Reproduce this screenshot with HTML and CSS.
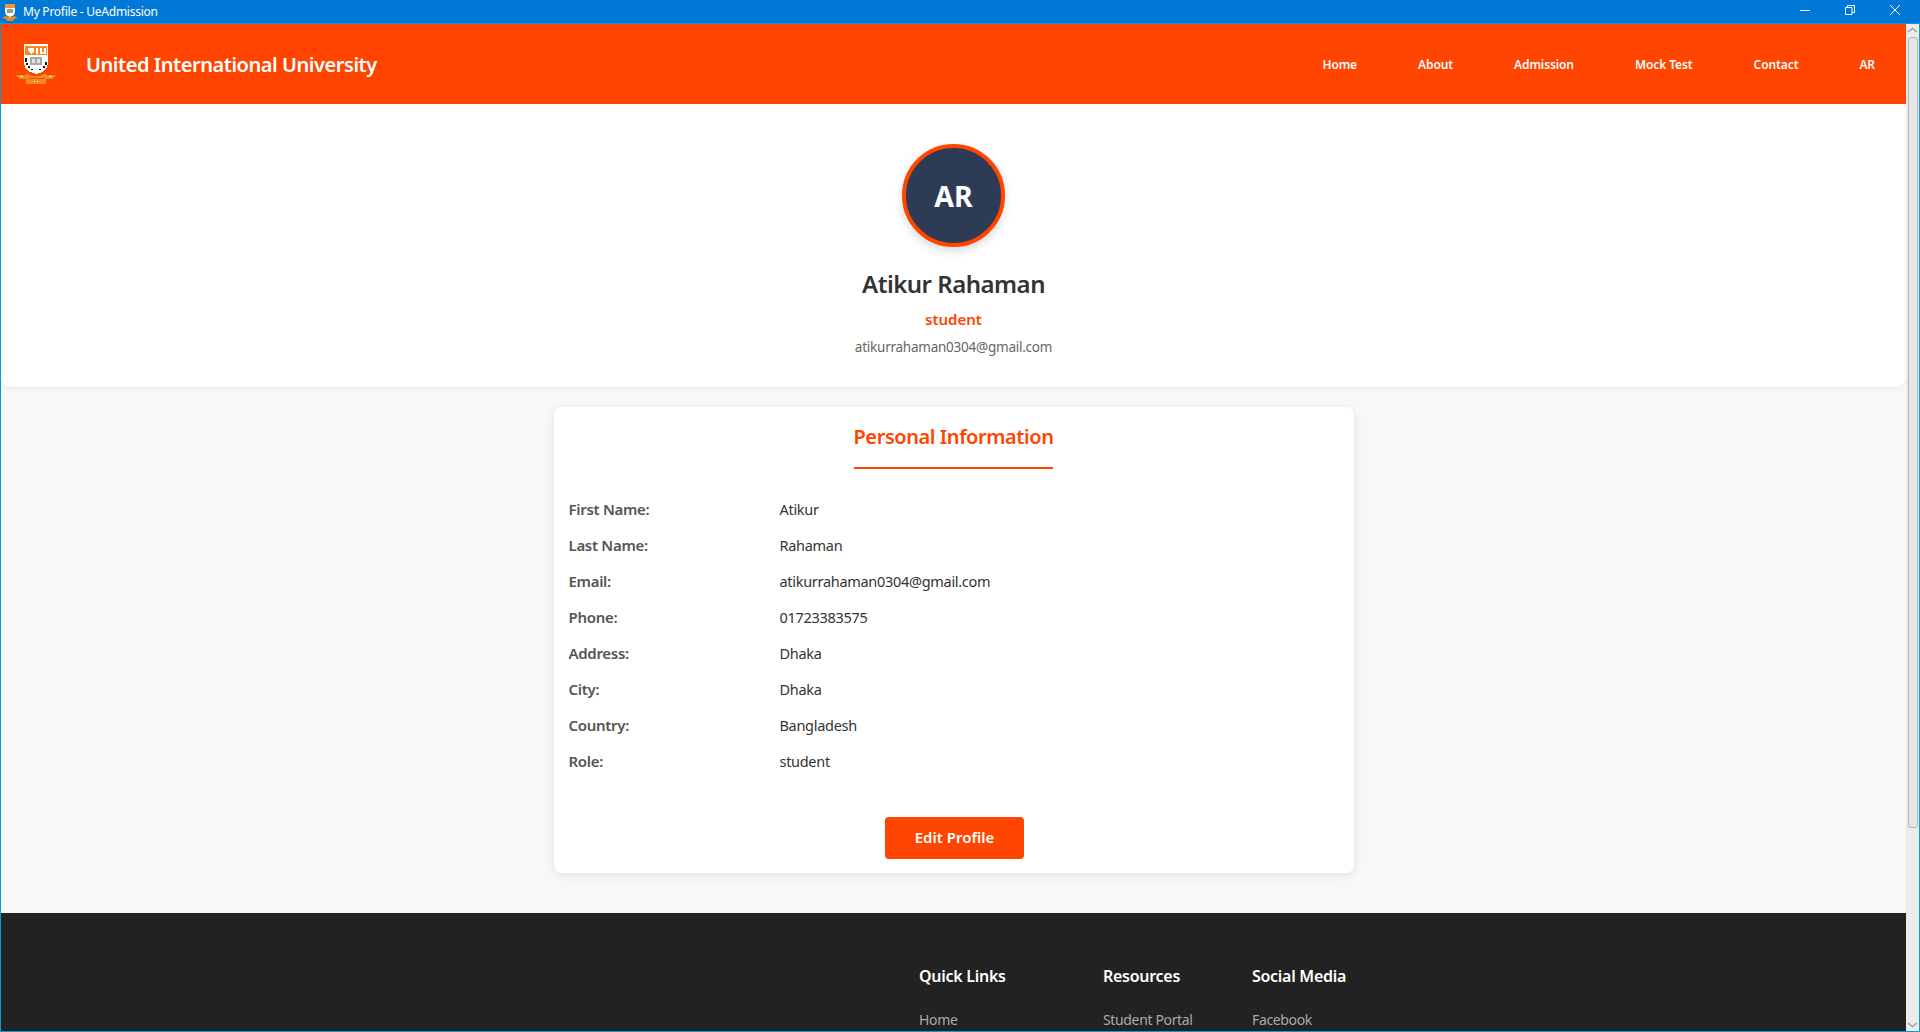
FILE: index.html
```html
<!DOCTYPE html>
<html lang="en">
<head>
<meta charset="utf-8">
<title>My Profile - UeAdmission</title>
<link rel="stylesheet" href="styles.css">
</head>
<body>
<div class="window">
  <div class="titlebar">
    <svg class="app-icon" width="16" height="18" viewBox="0 0 16 18"><path d="M3 1h10v8l-1 3-4 2-4-2-1-3z" fill="#fff"/><path d="M3 1h10v4H3z" fill="#f4943a"/><path d="M5 6h6v4H5z" fill="#9a9a9a"/><path d="M0 15l4-2 2 1h4l2-1 4 2-4 1-1 2H5l-1-2z" fill="#f58a1f"/></svg>
    <span class="title-text">My Profile - UeAdmission</span>
    <div class="win-controls">
      <svg width="10" height="10" viewBox="0 0 10 10"><path d="M0 5.500h10" stroke="#fff" fill="none"/></svg>
      <svg width="10" height="10" viewBox="0 0 10 10"><path d="M.5 2.500h6.500v7H.5zM2.500 2.500V.5h7v7H7" stroke="#fff" fill="none"/></svg>
      <svg width="10" height="10" viewBox="0 0 10 10"><path d="M0 0l10 10M10 0L0 10" stroke="#fff" fill="none"/></svg>
    </div>
  </div>
  <div class="client">
    <div class="viewport">
      <header class="navbar">
        <div class="brand">
          <svg class="logo" width="40" height="40" viewBox="0 0 40 40" shape-rendering="crispEdges">
            <path d="M8 0h24v20l-2 5-4 3-6 2-6-2-4-3-2-5z" fill="#fff"/>
            <path d="M9 2h22v9H9z" fill="#f58a1f"/>
            <path d="M12 4h6v3l-3 3-3-3zM20 4h2v6h-2zM24 4h2v4h2V4h2v6h-6z" fill="#fff"/>
            <path d="M14 13h12v8H14z" fill="#a8a8a8"/><path d="M16 15h3v4h-3zM21 15h3v4h-3z" fill="#e6e6e6"/>
            <path d="M9 14h2v4H9zM10 19h2v2h-2zM12 22h2v2h-2zM15 25h2v1h-2zM23 25h2v1h-2zM27 22h2v2h-2zM29 18h2v3h-2z" fill="#111"/>
            <path d="M0 31h8l4-1 4 2h8l4-2 4 1h8l-3 4H29l-1-1H12l-1 1H3z" fill="#f58a1f"/>
            <path d="M4 32h3v1H4zM33 32h3v1h-3z" fill="#fff"/>
            <path d="M10 35h20v5H10z" fill="#f58a1f"/><path d="M18 37h1v1h-1zM21 37h1v1h-1z" fill="#fff"/>
          </svg>
          <span class="brand-name">United International University</span>
        </div>
        <nav class="nav-links">
          <a>Home</a><a>About</a><a>Admission</a><a>Mock Test</a><a>Contact</a><a>AR</a>
        </nav>
      </header>
      <section class="profile-head">
        <div class="avatar">AR</div>
        <h1 class="name">Atikur Rahaman</h1>
        <div class="role">student</div>
        <div class="email">atikurrahaman0304@gmail.com</div>
      </section>
      <section class="card">
        <div class="card-head"><h2>Personal Information</h2></div>
        <dl class="rows">
          <div class="row"><dt>First Name:</dt><dd>Atikur</dd></div>
          <div class="row"><dt>Last Name:</dt><dd>Rahaman</dd></div>
          <div class="row"><dt>Email:</dt><dd>atikurrahaman0304@gmail.com</dd></div>
          <div class="row"><dt>Phone:</dt><dd>01723383575</dd></div>
          <div class="row"><dt>Address:</dt><dd>Dhaka</dd></div>
          <div class="row"><dt>City:</dt><dd>Dhaka</dd></div>
          <div class="row"><dt>Country:</dt><dd>Bangladesh</dd></div>
          <div class="row"><dt>Role:</dt><dd>student</dd></div>
        </dl>
        <div class="actions"><button class="btn">Edit Profile</button></div>
      </section>
      <footer class="footer">
        <div class="foot-col"><h3>Quick Links</h3><a>Home</a></div>
        <div class="foot-col"><h3>Resources</h3><a>Student Portal</a></div>
        <div class="foot-col"><h3>Social Media</h3><a>Facebook</a></div>
      </footer>
    </div>
    <div class="scrollbar">
      <svg class="arrow" width="13" height="9" viewBox="0 0 13 9"><path d="M2 6l4.500-3.500L11 6" stroke="#a0a0a0" stroke-width="1.500" fill="none"/></svg>
      <div class="thumb"></div>
      <svg class="arrow" width="13" height="9" viewBox="0 0 13 9"><path d="M2 3l4.500 3.500L11 3" stroke="#a0a0a0" stroke-width="1.500" fill="none"/></svg>
    </div>
  </div>
</div>
</body>
</html>
```
FILE: styles.css
```css
* { box-sizing: border-box; }
html, body { margin: 0; padding: 0; height: 100%; overflow: hidden; }
body { font-family: "Noto Sans", "Open Sans", sans-serif; color: #333; background: #f8f8f8; }
.window { height: 1032px; display: flex; flex-direction: column; }
.titlebar { height: 24px; flex: none; background: #0078d7; border-bottom: 1px solid #0a9be0; display: flex; align-items: center; color: #fff; font-size: 12px; padding-left: 2px; }
.app-icon { flex: none; }
.title-text { margin-left: 5px; letter-spacing: -.25px; }
.win-controls { margin-left: auto; display: flex; align-items: center; gap: 35px; padding-right: 20px; margin-bottom: 3px; }
.client { flex: 1; min-height: 0; display: flex; border: 1px solid #0a9bd8; border-top: 0; }
.viewport { flex: 1; min-width: 0; overflow: hidden; background: #f8f8f8; }
.navbar { height: 80px; background: #ff4500; color: #fff; display: flex; align-items: center; justify-content: space-between; padding: 0 31px 0 15px; }
.brand { display: flex; align-items: center; gap: 30px; }
.brand-name { font-size: 20px; font-weight: 600; letter-spacing: -.45px; }
.nav-links { display: flex; gap: 61px; font-size: 12px; font-weight: 600; letter-spacing: -.1px; }
.profile-head { background: #fff; height: 283px; padding-top: 40px; border-radius: 0 0 10px 10px; box-shadow: 0 2px 5px rgba(0,0,0,.05); display: flex; flex-direction: column; align-items: center; }
.avatar { width: 103px; height: 103px; padding-top: 1px; border-radius: 50%; border: 4px solid #ff4500; background: #2d3b55; color: #fff; font-size: 28.500px; font-weight: 700; display: flex; align-items: center; justify-content: center; box-shadow: 0 4px 10px rgba(0,0,0,.15); }
.name { margin: 20px 0 0; font-size: 24px; font-weight: 600; line-height: 33px; color: #333; letter-spacing: -.5px; }
.role { margin-top: 9px; font-size: 15px; line-height: 20px; font-weight: 600; color: #ff4500; }
.email { margin-top: 9px; font-size: 13.500px; line-height: 19px; color: #666; letter-spacing: -.24px; }
.card { width: 800px; height: 466px; margin: 20px auto 0; background: #fff; border-radius: 8px; box-shadow: 0 2px 10px rgba(0,0,0,.1); padding: 16px 15px 0; }
.card-head { display: flex; justify-content: center; }
.card-head h2 { margin: 0; font-size: 20px; font-weight: 600; color: #ff4500; line-height: 27px; padding-bottom: 17px; border-bottom: 2px solid #ff4500; letter-spacing: -.43px; }
.rows { margin: 22px 0 0; }
.row { display: flex; height: 36px; align-items: center; font-size: 15px; }
.row dt { width: 211px; font-weight: 600; color: #555; letter-spacing: -.3px; }
.row dd { margin: 0; color: #333; font-size: 14.500px; letter-spacing: -.3px; }
.actions { display: flex; justify-content: center; margin-top: 38px; padding-left: 2px; }
.btn { width: 139px; height: 42px; padding: 0 0 2px; border: 0; border-radius: 4px; background: #ff4500; color: #fff; font: 600 15px "Noto Sans", sans-serif; }
.footer { margin-top: 40px; height: 118px; background: #222; padding: 51px 0 0 918px; display: grid; grid-template-columns: 184px 149px auto; align-content: start; }
.foot-col h3 { margin: 0; font-size: 16px; font-weight: 600; line-height: 24px; color: #fff; letter-spacing: -.28px; }
.foot-col a { display: block; margin-top: 22px; font-size: 14px; line-height: 19px; color: #aaa; letter-spacing: -.35px; }
.scrollbar { flex: none; width: 13px; background: #ececec; display: flex; flex-direction: column; align-items: center; justify-content: space-between; padding: 2px 0; }
.arrow { flex: none; }
.thumb { width: 10px; height: 791px; margin-top: 2px; margin-bottom: auto; background: #e6e6e6; border: 1px solid #b5b5b5; border-radius: 3px; }
```
